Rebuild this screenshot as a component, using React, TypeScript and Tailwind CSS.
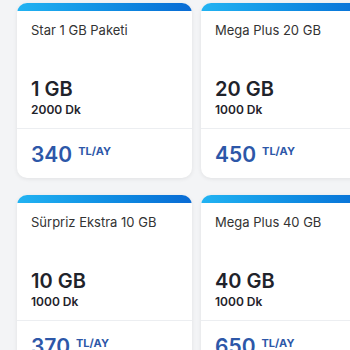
import React from "react";

const plans = [
  { name: "Star 1 GB Paketi", gb: "1 GB", dk: "2000 Dk", price: "340" },
  { name: "Mega Plus 20 GB", gb: "20 GB", dk: "1000 Dk", price: "450" },
  { name: "Sürpriz Ekstra 10 GB", gb: "10 GB", dk: "1000 Dk", price: "370" },
  { name: "Mega Plus 40 GB", gb: "40 GB", dk: "1000 Dk", price: "650" },
];

function Card({ p }: { p: (typeof plans)[number] }) {
  return (
    <div className="w-[175px] h-[175px] shrink-0 bg-white rounded-[10px] shadow-[0_1px_4px_rgba(0,0,0,0.08)] flex flex-col overflow-hidden">
      <div className="h-[8px] bg-gradient-to-r from-[#22b3f2] to-[#0a6bd4]" />
      <div className="h-[118px] px-[14px] pt-[11px] flex flex-col justify-between pb-[10px] border-b border-[#eceef1]">
        <div className="text-[13px] leading-[16px] text-[#333]">{p.name}</div>
        <div>
          <div className="text-[20px] leading-[22px] font-semibold text-[#1f232b]">{p.gb}</div>
          <div className="text-[12px] leading-[16px] font-semibold text-[#1f232b] mt-[2px]">{p.dk}</div>
        </div>
      </div>
      <div className="px-[14px] pt-[14px] flex items-start">
        <span className="text-[21px] leading-[24px] font-semibold text-[#2d57a8]">{p.price}</span>
        <span className="text-[11px] leading-[12px] font-bold text-[#2d57a8] ml-[6px] mt-[2px]">TL/AY</span>
      </div>
    </div>
  );
}

export default function App() {
  return (
    <div className="w-[350px] h-[350px] overflow-hidden bg-[#f3f4f6] font-['Inter',sans-serif]">
      <div className="flex flex-col gap-[17px] pt-[3px] pl-[17px]">
        <div className="flex gap-[9px]">
          <Card p={plans[0]} />
          <Card p={plans[1]} />
        </div>
        <div className="flex gap-[9px]">
          <Card p={plans[2]} />
          <Card p={plans[3]} />
        </div>
      </div>
    </div>
  );
}
